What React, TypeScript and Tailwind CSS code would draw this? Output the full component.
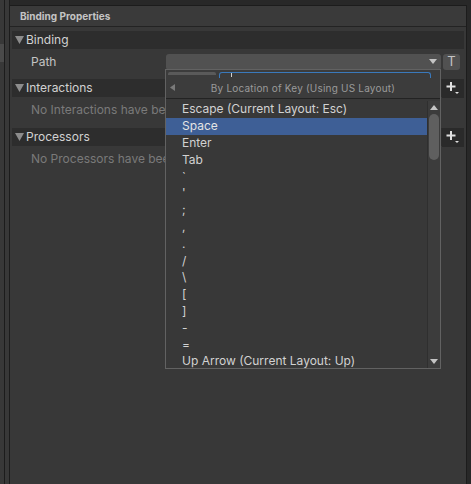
import React from 'react';

const keys = [
  'Escape (Current Layout: Esc)',
  'Space',
  'Enter',
  'Tab',
  '`',
  "'",
  ';',
  ',',
  '.',
  '/',
  '\\',
  '[',
  ']',
  '-',
  '=',
  'Up Arrow (Current Layout: Up)',
];

const Triangle = () => (
  <svg width="9" height="8" viewBox="0 0 9 8" className="shrink-0">
    <path d="M0 0 H9 L4.5 8 Z" fill="#8c8c8c" />
  </svg>
);

const PlusButton = () => (
  <div className="w-[22px] h-[19px] flex items-center justify-center bg-[#2a2a2a]">
    <svg width="14" height="14" viewBox="0 0 14 14">
      <path d="M5 1 V10 M0.5 5.5 H9.5" stroke="#e0e0e0" strokeWidth="2" />
      <path d="M9 11 H13 L11 13 Z" fill="#e0e0e0" />
    </svg>
  </div>
);

const Foldout = ({ title, right }: { title: string; right?: React.ReactNode }) => (
  <div className="h-[18px] flex items-center bg-[#2d2d2d] pl-[3px]">
    <Triangle />
    <span className="ml-[2px] text-[12px] leading-none text-[#d2d2d2]">{title}</span>
    <div className="flex-1" />
    {right}
  </div>
);

export default function App() {
  return (
    <div
      className="w-[471px] h-[484px] bg-[#282828] flex overflow-hidden relative antialiased"
      style={{ fontFamily: 'Inter, "Noto Sans", sans-serif' }}
    >
      {/* neighbour panel edge */}
      <div className="w-[4px] h-full bg-[#383838] flex flex-col">
        <div className="h-[44px]" />
        <div className="h-[18px] bg-[#4a4a4a]" />
      </div>
      <div className="w-px h-full bg-[#1c1c1c]" />
      <div className="w-[4px] h-full bg-[#383838]" />
      <div className="w-px h-full bg-[#1c1c1c]" />

      {/* main panel */}
      <div className="flex-1 mt-[5px] flex flex-col border-t border-r border-[#1c1c1c] bg-[#383838] mr-[4px]">
        <div className="h-[21px] flex items-center pl-[10px] bg-[#3a3a3a] border-b border-[#232323]">
          <span className="text-[10px] leading-none font-bold text-[#c4c4c4]">Binding Properties</span>
        </div>

        <div className="px-[2px] pt-[4px] flex flex-col">
          <Foldout title="Binding" />
          <div className="h-[21px] flex items-center mt-[2px]">
            <span className="ml-[19px] w-[135px] text-[12px] leading-none text-[#c4c4c4]">Path</span>
            <div className="w-[275px] h-[16px] bg-[#515151] rounded-[3px] flex items-center justify-end pr-[4px]">
              <svg width="8" height="5" viewBox="0 0 8 5">
                <path d="M0 0 H8 L4 5 Z" fill="#c4c4c4" />
              </svg>
            </div>
            <div className="ml-[2px] w-[17px] h-[16px] bg-[#515151] rounded-[3px] flex items-center justify-center text-[13px] leading-none text-[#c4c4c4]">
              T
            </div>
          </div>

          <div className="mt-[7px]">
            <Foldout title="Interactions" right={<PlusButton />} />
          </div>
          <div className="h-[26px] flex items-center pl-[19px] text-[12px] leading-none text-[#7a7a7a] whitespace-nowrap">
            No Interactions have been added.
          </div>

          <div className="mt-[5px]">
            <Foldout title="Processors" right={<PlusButton />} />
          </div>
          <div className="h-[26px] flex items-center pl-[19px] text-[12px] leading-none text-[#7a7a7a] whitespace-nowrap">
            No Processors have been added.
          </div>
        </div>
      </div>

      {/* key picker popup */}
      <div className="absolute left-[165px] top-[69px] w-[276px] h-[300px] bg-[#3c3c3c] border border-[#626262] flex flex-col overflow-hidden">
        <div className="h-[7px] flex items-start pt-[2px] pl-[2px] gap-[3px] shrink-0">
          <div className="w-[48px] h-[3px] bg-[#5a5a5a] rounded-t-[2px]" />
          <div className="w-[212px] h-[6px] border-t border-l border-r border-[#3a79bb] rounded-t-[3px] relative">
            <div className="absolute left-[11px] top-0 w-px h-[4px] bg-[#d0d0d0]" />
          </div>
        </div>
        <div className="h-[22px] flex items-center relative shrink-0 border-b border-[#232323]">
          <svg width="5" height="7" viewBox="0 0 5 7" className="absolute left-[4px]">
            <path d="M5 0 V7 L0 3.5 Z" fill="#7a7a7a" />
          </svg>
          <span className="w-full text-center text-[10px] leading-none text-[#9a9a9a] tracking-[0.2px]">
            By Location of Key (Using US Layout)
          </span>
        </div>
        <div className="flex flex-1 min-h-0 bg-[#383838] pt-[2px]">
          <div className="flex-1 flex flex-col overflow-hidden">
            {keys.map((k, i) => (
              <div
                key={k}
                className={
                  i === 1
                    ? 'h-[16.8px] shrink-0 flex items-center pl-[16px] text-[12px] leading-none text-[#e4e4e4] bg-[#3e5f96] whitespace-nowrap'
                    : 'h-[16.8px] shrink-0 flex items-center pl-[16px] text-[12px] leading-none text-[#d2d2d2] whitespace-nowrap'
                }
              >
                {k}
              </div>
            ))}
          </div>
          <div className="w-[13px] shrink-0 bg-[#3c3c3c] border-l border-[#2f2f2f] flex flex-col items-center">
            <svg width="8" height="5" viewBox="0 0 8 5" className="mt-[4px]">
              <path d="M4 0 L8 5 H0 Z" fill="#c4c4c4" />
            </svg>
            <div className="mt-[4px] w-[10px] h-[46px] bg-[#5f5f5f] rounded-[5px]" />
            <div className="flex-1" />
            <svg width="8" height="5" viewBox="0 0 8 5" className="mb-[4px]">
              <path d="M0 0 H8 L4 5 Z" fill="#c4c4c4" />
            </svg>
          </div>
        </div>
      </div>
    </div>
  );
}
